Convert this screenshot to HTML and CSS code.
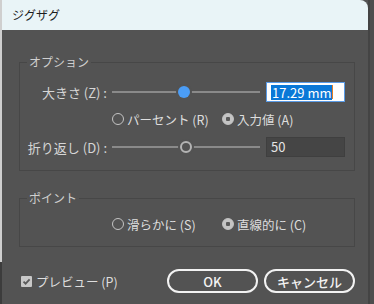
FILE: index.html
```html
<!DOCTYPE html>
<html lang="ja">
<head>
    <meta charset="UTF-8">
    <title>ジグザグ</title>
    <link rel="stylesheet" href="styles.css">
</head>
<body>
    <div class="dialog">
        <div class="titlebar">ジグザグ</div>
        <div class="content">
            <fieldset class="group">
                <legend>オプション</legend>
                <div class="rows">
                    <div class="row">
                        <label class="label">大きさ (Z) :</label>
                        <div class="slider">
                            <span class="track"></span>
                            <span class="thumb blue" style="left: 66px"></span>
                        </div>
                        <div class="field active"><span class="sel">17.29 mm</span><span class="caret"></span></div>
                    </div>
                    <div class="row">
                        <span></span>
                        <div class="choices">
                            <span class="choice first"><span class="radio"></span>パーセント (R)</span>
                            <span class="choice"><span class="radio on"></span>入力値 (A)</span>
                        </div>
                    </div>
                    <div class="row">
                        <label class="label">折り返し (D) :</label>
                        <div class="slider">
                            <span class="track"></span>
                            <span class="thumb ring" style="left: 68px"></span>
                        </div>
                        <div class="field">50</div>
                    </div>
                </div>
            </fieldset>

            <fieldset class="group second">
                <legend>ポイント</legend>
                <div class="rows">
                    <div class="row">
                        <span></span>
                        <div class="choices">
                            <span class="choice first"><span class="radio"></span>滑らかに (S)</span>
                            <span class="choice"><span class="radio on"></span>直線的に (C)</span>
                        </div>
                    </div>
                </div>
            </fieldset>

            <div class="footer">
                <span class="check"><span class="box">
                    <svg width="11" height="11" viewBox="0 0 11 11"><path d="M2.5 5.6 L4.6 7.7 L8.6 3.4" fill="none" stroke="#5a5a5a" stroke-width="1.8"/></svg>
                </span>プレビュー (P)</span>
                <div class="buttons">
                    <button class="btn">OK</button>
                    <button class="btn">キャンセル</button>
                </div>
            </div>
        </div>
    </div>
</body>
</html>
```

FILE: styles.css
```css
html {
    background:
        linear-gradient(to right, transparent 2px, #4e4e4e 2px),
        linear-gradient(#cfcfcf 262px, #3c3c3c 262px);
}

body {
    margin: 0;
    font-family: "Noto Sans CJK JP", "Noto Sans", sans-serif;
    font-size: 12px;
    color: #d6d6d6;
}

.dialog {
    margin-left: 2px;
    width: 366px;
    height: 304px;
    background: #535353;
    border-right: 2px solid #444;
}

.titlebar {
    height: 30px;
    line-height: 30px;
    padding-left: 10px;
    background: #e9f4f7;
    color: #1c1c1c;
    border-top-right-radius: 8px;
}

.content {
    padding: 24px 13px 0 17px;
}

.group {
    margin: 0;
    padding: 0;
    border: 1px solid #474747;
    min-width: 0;
}

.group legend {
    margin-left: 7px;
    padding: 0 2px;
    line-height: 16px;
    color: #cfcfcf;
}

.group.second {
    margin-top: 19px;
}

.rows {
    display: flex;
    flex-direction: column;
    gap: 7px;
    padding: 12px 0 13px;
}

.second .rows {
    padding: 8px 0 12px;
}

.row {
    display: grid;
    grid-template-columns: 87px 148px 80px;
    column-gap: 5px;
    height: 20px;
    align-items: center;
}

.row + .row + .row {
    margin-top: 1px;
}

.label {
    text-align: right;
    white-space: nowrap;
    font-size: 13px;
}

.slider {
    position: relative;
    height: 20px;
}

.track {
    display: block;
    margin-top: 9px;
    height: 2px;
    background: #8a8a8a;
}

.thumb {
    position: absolute;
    top: 4px;
    width: 12px;
    height: 12px;
    border-radius: 50%;
    box-sizing: border-box;
    box-shadow: 0 0 0 2px #535353;
}

.thumb.blue {
    background: #4b9df6;
}

.thumb.ring {
    background: #535353;
    border: 2px solid #b4b4b4;
}

.field {
    margin-left: 1px;
    height: 20px;
    box-sizing: border-box;
    border: 1px solid #3f3f3f;
    background: #454545;
    color: #e4e4e4;
    font-size: 13px;
    line-height: 18px;
    padding-left: 4px;
}

.field.active {
    display: flex;
    align-items: center;
    background: #fff;
    border: 1px solid #5a9be6;
}

.sel {
    background: #0a78d7;
    color: #fff;
    line-height: 15px;
    padding: 0 1px;
}

.caret {
    width: 1px;
    height: 14px;
    background: #e67e22;
}

.choices {
    grid-column: 2 / span 2;
    display: flex;
    align-items: center;
    color: #dedede;
    font-size: 12.5px;
}

.choice {
    display: flex;
    align-items: center;
    gap: 3px;
    white-space: nowrap;
}

.choice.first {
    width: 110px;
}

.radio {
    width: 12px;
    height: 12px;
    box-sizing: border-box;
    border-radius: 50%;
    border: 1.5px solid #c4c4c4;
}

.radio.on {
    background: radial-gradient(circle, #5a5a5a 0 2px, #c4c4c4 2.5px);
    border-color: #c4c4c4;
}

.footer {
    margin-top: 22px;
    display: flex;
    align-items: center;
    justify-content: space-between;
    height: 24px;
}

.check {
    display: flex;
    align-items: center;
    gap: 4px;
    margin-left: 2px;
    color: #dedede;
    font-size: 12.5px;
}

.box {
    width: 11px;
    height: 11px;
    background: #c8c8c8;
    border-radius: 1px;
    display: flex;
}

.buttons {
    display: flex;
    gap: 6px;
}

.btn {
    width: 91px;
    height: 24px;
    border: 2px solid #f2f2f2;
    border-radius: 12px;
    background: transparent;
    color: #f2f2f2;
    font-family: "Noto Sans CJK JP", "Noto Sans", sans-serif;
    font-size: 13px;
    font-weight: 500;
    padding: 0;
}
```
